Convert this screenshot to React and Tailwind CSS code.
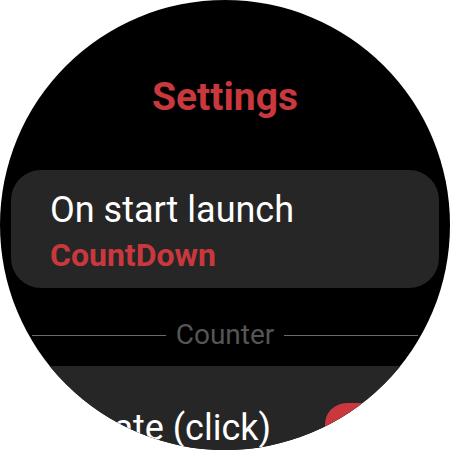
export default function App() {
  return (
    <div className="w-[450px] h-[450px] bg-white" style={{ fontFamily: "Roboto, sans-serif" }}>
      <div className="w-[450px] h-[450px] rounded-full bg-black overflow-hidden flex flex-col items-center">
        <h1 className="mt-[74px] text-[39px] leading-[46px] font-bold text-[#c9383d]">Settings</h1>

        <div className="mt-[50px] w-[428px] h-[118px] shrink-0 rounded-[30px] bg-[#262626] flex flex-col pl-[39px] pt-[19px]">
          <div className="text-[36px] leading-[42px] text-white">On start launch</div>
          <div className="mt-[5px] text-[32px] leading-[38px] font-bold text-[#c9383d]">CountDown</div>
        </div>

        <div className="mt-[30px] w-[386px] flex items-center gap-[10px]">
          <div className="flex-1 h-px bg-[#6b6b6b]"></div>
          <span className="text-[28px] leading-[34px] text-[#555555]">Counter</span>
          <div className="flex-1 h-px bg-[#6b6b6b]"></div>
        </div>

        <div className="mt-[14px] w-[428px] h-[117px] shrink-0 rounded-[30px] bg-[#262626] flex items-center justify-between pl-[39px] pr-[38px]">
          <span className="mt-[6px] text-[36px] leading-[42px] text-white">Vibrate (click)</span>
          <div className="w-[76px] h-[43px] rounded-full bg-[#c9383d]"></div>
        </div>
      </div>
    </div>
  );
}
